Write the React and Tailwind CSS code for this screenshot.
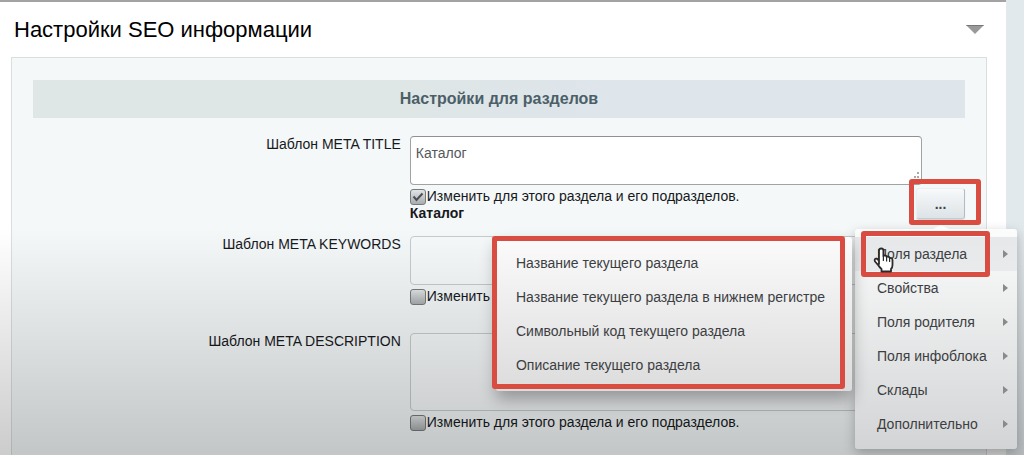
import React, { useState } from 'react'

const fields = [
  {
    id: 'meta-title',
    label: 'Шаблон META TITLE',
    value: 'Каталог',
    inherited: true,
    caption: 'Каталог',
    height: 'h-[49px]',
    spacing: 'pb-[14px]',
  },
  {
    id: 'meta-keywords',
    label: 'Шаблон META KEYWORDS',
    value: '',
    inherited: false,
    height: 'h-[49px]',
    spacing: 'pb-7',
  },
  {
    id: 'meta-description',
    label: 'Шаблон META DESCRIPTION',
    value: '',
    inherited: false,
    height: 'h-[78px]',
    spacing: 'pb-6',
  },
]

const menuItems = ['Поля раздела', 'Свойства', 'Поля родителя', 'Поля инфоблока', 'Склады', 'Дополнительно']

const submenuItems = [
  'Название текущего раздела',
  'Название текущего раздела в нижнем регистре',
  'Символьный код текущего раздела',
  'Описание текущего раздела',
]

const Frame = ({ className }) => (
  <div className={`pointer-events-none absolute z-30 rounded-[3px] border-[5px] border-[#d94c41] ${className}`} />
)

const HandCursor = () => (
  <svg className="pointer-events-none absolute top-[18px] left-[18px] z-40" width="22" height="27" viewBox="0 0 22 27" aria-hidden="true">
    <path
      d="M6 17V3.500Q6 1.500 8.200 1.500T10.400 3.500V9Q12.500 7.500 13.600 9.800Q15.800 8.800 16.600 11Q19.500 10.500 19.500 13.500V18Q19.500 20.500 18 22V24.500H8.500V22Q6.500 20.500 5 17.800L2 14.500Q1 12 3 11.500Q4.800 11.500 6 14Z"
      fill="#fff"
      stroke="#2b2b2b"
      strokeWidth="1.800"
      strokeLinejoin="round"
    />
    <path d="M10.400 9V14M13.600 10V14.500M16.600 11V15" stroke="#2b2b2b" strokeWidth="1.200" />
  </svg>
)

const Submenu = () => (
  <div className="absolute top-2 right-full mr-[3px] w-[356px] rounded-[3px] bg-linear-to-b from-[#fbfbfc] to-[#dcdcdc] py-[9px] shadow-[0_8px_16px_rgba(0,0,0,0.3)]">
    <ul>
      {submenuItems.map((item) => (
        <li key={item}>
          <button type="button" className="block h-[34px] w-full pl-5 text-left whitespace-nowrap">
            {item}
          </button>
        </li>
      ))}
    </ul>
    <Frame className="-top-px right-[7px] bottom-[2px] -left-1" />
  </div>
)

const Menu = () => (
  <div className="absolute top-full -right-[52px] z-20 mt-[10px] w-[162px] rounded-[3px] bg-linear-to-b from-[#fbfcfc] to-[#d3d4d5] py-2 text-[#3c3e42] shadow-[0_4px_12px_rgba(0,0,0,0.25)]">
    <div className="absolute -top-1 left-[78px] h-0 w-0 border-x-8 border-b-4 border-x-transparent border-b-[#fbfcfc]" />
    <ul>
      {menuItems.map((item, i) => (
        <li key={item}>
          <button
            type="button"
            className={`flex h-[34px] w-full items-center justify-between pr-[9px] pl-[22px] text-left whitespace-nowrap ${i === 0 ? 'bg-linear-to-b from-[#e6e8e9] to-[#e9eaeb]' : ''}`}
          >
            {item}
            <svg width="5" height="8" viewBox="0 0 5 8" aria-hidden="true">
              <path d="M0 0L5 4L0 8Z" fill="#8a8a8a" />
            </svg>
          </button>
        </li>
      ))}
    </ul>
    <Frame className="top-[2px] left-[6px] h-[46px] w-[129px]" />
    <HandCursor />
    <Submenu />
  </div>
)

const Field = ({ field }) => {
  const [value, setValue] = useState(field.value)
  const [checked, setChecked] = useState(field.inherited)

  return (
    <div className={`grid grid-cols-[40%_60%] ${field.spacing}`}>
      <label htmlFor={field.id} className="pr-[5px] text-right leading-[17px]">
        {field.label}
      </label>
      <div className="pl-1">
        <div className="relative mr-[43px]">
          <textarea
            id={field.id}
            value={value}
            onChange={(e) => setValue(e.target.value)}
            className={`block w-full resize-none rounded border px-[5px] py-2 leading-[17px] text-[#55585c] outline-none ${field.height} ${field.inherited ? 'border-[#9ea3a4] border-t-[#8e9192] bg-white' : 'border-[#c6cccd] bg-white/20'}`}
          />
          {field.inherited && (
            <svg className="absolute right-[2px] bottom-[3px]" width="10" height="10" viewBox="0 0 10 10" fill="#aaa" aria-hidden="true">
              <path d="M7 0h2v2h-2zM4 4h2v2h-2zM7 4h2v2h-2zM0 8h2v2h-2zM4 8h2v2h-2zM7 8h2v2h-2z" />
            </svg>
          )}
        </div>
        <div className="mt-[3px] flex items-start justify-between">
          <div className="leading-[17px]">
            <label className="flex h-[17px] items-center gap-px whitespace-nowrap">
              <span className="relative flex">
                <input
                  type="checkbox"
                  checked={checked}
                  onChange={(e) => setChecked(e.target.checked)}
                  className="peer h-4 w-4 appearance-none rounded-[3px] border border-[#777b7d] bg-linear-to-b from-[#e2e4e5] to-[#a9adaf]"
                />
                <svg className="pointer-events-none absolute top-[3px] left-[2px] hidden peer-checked:block" width="12" height="10" viewBox="0 0 12 10" aria-hidden="true">
                  <path d="M1.500 4.500L4.500 8L10.500 1.500" fill="none" stroke="#4c4f52" strokeWidth="2" />
                </svg>
              </span>
              Изменить для этого раздела и его подразделов.
            </label>
            {field.caption && <b className="block">{field.caption}</b>}
          </div>
          {field.caption && (
            <div className="relative">
              <button
                type="button"
                aria-label="Вставить поле"
                className="block h-[31px] w-[49px] rounded-[3px] border border-[#eceff1] border-r-[#b5bcc0] border-b-[#c5cbce] bg-linear-to-b from-[#f7f9fa] to-[#dde3e7] font-bold text-[#3f4449] shadow-[0_1px_1px_rgba(0,0,0,0.15)]"
              >
                ...
              </button>
              <Frame className="-top-[9px] -right-4 -bottom-[6px] -left-[7px]" />
              <Menu />
            </div>
          )}
        </div>
      </div>
    </div>
  )
}

const App = () => {
  return (
    <div className="relative flex min-h-screen overflow-hidden bg-[#e2e9ec] font-['Liberation_Sans',Arial,sans-serif] text-sm text-[#17191c]">
      <main className="mr-[18px] flex flex-1 flex-col border-t-2 border-[#a3a3a3] bg-white">
        <header className="flex h-[55px] items-center justify-between pr-[22px] pl-[14px]">
          <h1 className="text-[22px] text-black">Настройки SEO информации</h1>
          <button type="button" aria-label="Свернуть">
            <svg width="18" height="9" viewBox="0 0 18 9" aria-hidden="true">
              <path d="M0 0H18L9 9Z" fill="#999" />
              <path d="M0 0H18L17 1H1Z" fill="#777" />
            </svg>
          </button>
        </header>
        <section className="mr-[19px] ml-[11px] flex-1 border border-b-0 border-[#d9dedf] bg-[#f4f8f9] px-[21px] pt-[22px]">
          <h2 className="mb-[18px] flex h-[38px] items-center justify-center bg-linear-to-r from-[#dfe6e6] from-40% to-[#dee5eb] to-60% text-base font-bold text-[#4b5f68]">
            Настройки для разделов
          </h2>
          {fields.map((field) => (
            <Field key={field.id} field={field} />
          ))}
        </section>
      </main>
      <div className="pointer-events-none absolute inset-x-0 bottom-0 z-10 h-1/2 bg-linear-to-b from-transparent to-black/20" />
    </div>
  )
}

export default App
